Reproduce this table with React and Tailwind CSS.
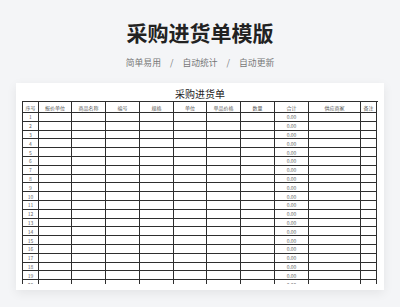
import React from "react";

const headers = ["序号", "报价单位", "商品名称", "编号", "规格", "单位", "单品价格", "数量", "合计", "供应商家", "备注"];

export default function App() {
  const rows = Array.from({ length: 20 }, (_, i) => i + 1);
  return (
    <div
      className="w-[400px] h-[307px] overflow-hidden bg-[#f4f5f7] flex flex-col items-center"
      style={{ fontFamily: '"Noto Sans CJK SC", "Noto Sans", sans-serif' }}
    >
      <div className="mt-[18px] text-[21px] leading-[28px] font-bold text-[#222]">
        采购进货单模版
      </div>
      <div className="mt-[11px] flex items-center text-[8.8px] leading-[12px] text-[#777]">
        <span>简单易用</span>
        <span className="mx-[9px]">/</span>
        <span>自动统计</span>
        <span className="mx-[9px]">/</span>
        <span>自动更新</span>
      </div>
      <div className="mt-[14px] w-[368px] bg-white shadow-[0_3px_10px_rgba(0,0,0,0.07)] px-[6px] pb-[6px]">
        <div className="pt-[5px] h-[18px] text-center text-[10px] leading-[12px] text-[#222]">
          采购进货单
        </div>
        <div className="h-[183px] overflow-hidden">
          <div className="border-l border-t border-[#2e2e2e] grid grid-cols-[16px_33px_34px_34px_34px_33px_34px_34px_34px_52px_16px]">
            {headers.map((h) => (
              <div
                key={h}
                className="h-[11px] border-r border-b border-[#2e2e2e] flex items-center justify-center text-[5px] leading-none text-[#555]"
              >
                {h}
              </div>
            ))}
            {rows.map((r) =>
              headers.map((h, ci) => (
                <div
                  key={r + h}
                  className="h-[8.8px] border-r border-b border-[#2e2e2e] flex items-center justify-center text-[5px] leading-none text-[#666]"
                >
                  {ci === 0 ? r : ci === 8 ? "0.00" : ""}
                </div>
              ))
            )}
          </div>
        </div>
      </div>
    </div>
  );
}
